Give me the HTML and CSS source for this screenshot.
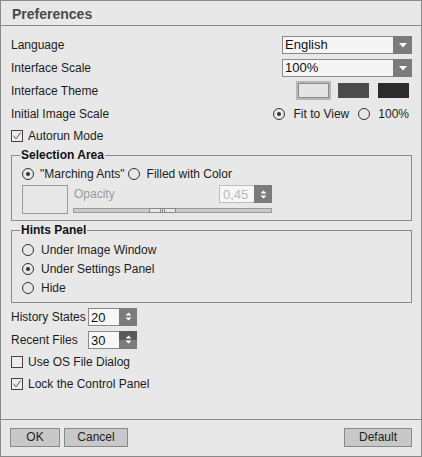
FILE: index.html
```html
<!DOCTYPE html>
<html>
<head>
<meta charset="utf-8">
<title>Preferences</title>
<link rel="stylesheet" href="styles.css">
</head>
<body>
<div class="window">
  <div class="titlebar">Preferences</div>
  <div class="content">
    <div class="row">
      <span class="label">Language</span>
      <div class="select">
        <span class="select-text">English</span>
        <span class="select-btn"><svg width="8" height="5" viewBox="0 0 8 5"><path d="M0 0H8L4 4.5Z" fill="#fff"/></svg></span>
      </div>
    </div>
    <div class="row">
      <span class="label">Interface Scale</span>
      <div class="select">
        <span class="select-text">100%</span>
        <span class="select-btn"><svg width="8" height="5" viewBox="0 0 8 5"><path d="M0 0H8L4 4.5Z" fill="#fff"/></svg></span>
      </div>
    </div>
    <div class="row">
      <span class="label">Interface Theme</span>
      <div class="themes">
        <span class="swatch swatch-light selected"></span>
        <span class="swatch swatch-mid"></span>
        <span class="swatch swatch-dark"></span>
      </div>
    </div>
    <div class="row">
      <span class="label">Initial Image Scale</span>
      <div class="radio-group">
        <span class="opt"><span class="radio checked"></span><span>Fit to View</span></span>
        <span class="opt"><span class="radio"></span><span>100%</span></span>
      </div>
    </div>
    <div class="row row-check">
      <span class="opt"><span class="checkbox"><svg width="10" height="10" viewBox="0 0 10 10"><path d="M1.5 4.8L4 7.8L8.8 1.5" fill="none" stroke="#555" stroke-width="1"/></svg></span><span>Autorun Mode</span></span>
    </div>

    <fieldset class="group group-sel">
      <legend>Selection Area</legend>
      <div class="sel-radios">
        <span class="opt"><span class="radio checked"></span><span>"Marching Ants"</span></span>
        <span class="opt"><span class="radio"></span><span>Filled with Color</span></span>
      </div>
      <div class="sel-color">
        <span class="color-box"></span>
        <div class="opacity">
          <div class="opacity-top">
            <span class="muted">Opacity</span>
            <div class="spin spin-disabled">
              <span class="spin-text">0,45</span>
              <span class="spin-btn"><svg width="7" height="9" viewBox="0 0 7 9"><path d="M0.5 3.5H6.5L3.5 0.5Z M0.5 5.5H6.5L3.5 8.5Z" fill="#fff"/></svg></span>
            </div>
          </div>
          <div class="slider">
            <span class="thumb" style="left:75px"><i></i><i></i><i></i></span>
          </div>
        </div>
      </div>
    </fieldset>

    <fieldset class="group group-hints">
      <legend>Hints Panel</legend>
      <div class="hint-row"><span class="opt"><span class="radio"></span><span>Under Image Window</span></span></div>
      <div class="hint-row"><span class="opt"><span class="radio checked"></span><span>Under Settings Panel</span></span></div>
      <div class="hint-row"><span class="opt"><span class="radio"></span><span>Hide</span></span></div>
    </fieldset>

    <div class="row row-spin first-spin">
      <span class="label label-fixed">History States</span>
      <div class="spin">
        <span class="spin-text">20</span>
        <span class="spin-btn"><svg width="7" height="9" viewBox="0 0 7 9"><path d="M0.5 3.5H6.5L3.5 0.5Z M0.5 5.5H6.5L3.5 8.5Z" fill="#fff"/></svg></span>
      </div>
    </div>
    <div class="row row-spin">
      <span class="label label-fixed">Recent Files</span>
      <div class="spin">
        <span class="spin-text">30</span>
        <span class="spin-btn spin-btn-hover"><svg width="7" height="9" viewBox="0 0 7 9"><path d="M0.5 3.5H6.5L3.5 0.5Z M0.5 5.5H6.5L3.5 8.5Z" fill="#fff"/></svg></span>
      </div>
    </div>
    <div class="row row-check">
      <span class="opt"><span class="checkbox"></span><span>Use OS File Dialog</span></span>
    </div>
    <div class="row row-check">
      <span class="opt"><span class="checkbox"><svg width="10" height="10" viewBox="0 0 10 10"><path d="M1.5 4.8L4 7.8L8.8 1.5" fill="none" stroke="#555" stroke-width="1"/></svg></span><span>Lock the Control Panel</span></span>
    </div>
  </div>
  <div class="footer">
    <div class="btns-left">
      <button class="btn btn-ok">OK</button>
      <button class="btn btn-cancel">Cancel</button>
    </div>
    <button class="btn btn-default">Default</button>
  </div>
</div>
</body>
</html>
```

FILE: styles.css
```css
html, body {
  margin: 0;
  padding: 0;
  background: #e8e8e8;
}
body {
  font-family: "Liberation Sans", Arial, sans-serif;
  font-size: 12px;
  color: #1c1c1c;
}
.window {
  width: 422px;
  height: 457px;
  box-sizing: border-box;
  border: 1px solid #8a8a8a;
  background: #e8e8e8;
  display: flex;
  flex-direction: column;
}
.titlebar {
  flex: none;
  height: 23px;
  padding-top: 1px;
  line-height: 24px;
  padding-left: 11px;
  border-bottom: 1px solid #8a8a8a;
  font-size: 14px;
  font-weight: bold;
  color: #4a4a4a;
}
.content {
  flex: 1;
  padding: 7px 9px 0 9px;
  display: flex;
  flex-direction: column;
}
.row {
  height: 23px;
  flex: none;
  display: flex;
  align-items: center;
  justify-content: space-between;
}
.label {
  padding-left: 1px;
}
.row-check {
  height: 22px;
  justify-content: flex-start;
}

/* select */
.select {
  width: 130px;
  height: 18px;
  box-sizing: border-box;
  border: 1px solid #8a8a8a;
  background: #f5f5f5;
  display: flex;
  align-items: stretch;
}
.select-text {
  flex: 1;
  padding-left: 2px;
  line-height: 16px;
  font-size: 13px;
  color: #111;
}
.select-btn {
  width: 19px;
  margin: -1px -1px -1px 0;
  background: #7b7b7b;
  display: flex;
  align-items: center;
  justify-content: center;
}
.select-btn svg {
  margin-top: 1px;
}

/* theme swatches */
.themes {
  display: flex;
  gap: 9px;
  padding-right: 3px;
}
.swatch {
  width: 31px;
  height: 15px;
  box-sizing: border-box;
}
.swatch-light {
  background: #e4e4e4;
  border: 1px solid #8c8c8c;
}
.swatch.selected {
  outline: 2px solid #b6b6b6;
}
.swatch-mid {
  background: #4b4b4b;
}
.swatch-dark {
  background: #2b2b2b;
}

/* radio / checkbox */
.radio-group {
  display: flex;
  gap: 9px;
  padding-right: 3px;
}
.opt {
  display: inline-flex;
  align-items: center;
  gap: 7px;
}
.radio-group .opt {
  gap: 8px;
}
.radio {
  width: 12px;
  height: 12px;
  box-sizing: border-box;
  border: 1px solid #333;
  border-radius: 50%;
  display: inline-flex;
  align-items: center;
  justify-content: center;
  flex: none;
}
.radio.checked::after {
  content: "";
  width: 4px;
  height: 4px;
  border-radius: 50%;
  background: #333;
}
.checkbox {
  width: 12px;
  height: 12px;
  box-sizing: border-box;
  border: 1px solid #444;
  background: #ececec;
  display: inline-flex;
  align-items: center;
  justify-content: center;
  flex: none;
  margin-left: 1px;
}
.row-check .opt {
  gap: 5px;
}

/* groups */
.group {
  margin: 1px 0 0 1px;
  padding: 0 10px 6px 10px;
  border: 1px solid #8a8a8a;
  min-width: 0;
}
.group legend {
  padding: 0 1px;
  margin-left: -2px;
  font-weight: bold;
  line-height: 14px;
  color: #111;
}
.sel-radios {
  height: 20px;
  margin-top: 2px;
  display: flex;
  align-items: center;
  gap: 3px;
}
.sel-radios .opt:first-child {
  gap: 6px;
}
.sel-color {
  margin-top: 1px;
  display: flex;
  align-items: flex-start;
}
.color-box {
  width: 46px;
  height: 29px;
  box-sizing: border-box;
  border: 1px solid #9a9a9a;
  background: #e8e8e8;
}
.opacity {
  width: 199px;
  margin-left: 5px;
  display: flex;
  flex-direction: column;
}
.opacity-top {
  height: 18px;
  display: flex;
  align-items: flex-start;
  justify-content: space-between;
}
.muted {
  color: #9a9a9a;
  line-height: 19px;
  padding-left: 1px;
}
.slider {
  position: relative;
  margin-top: 5px;
  height: 5px;
  box-sizing: border-box;
  border: 1px solid #9a9a9a;
  background: #cbcbcb;
}
.thumb {
  position: absolute;
  top: -1px;
  width: 27px;
  height: 5px;
  box-sizing: border-box;
  border: 1px solid #8a8a8a;
  background: #e6e6e6;
  display: flex;
  justify-content: center;
  gap: 1px;
}
.thumb i {
  width: 1px;
  height: 3px;
  background: #8a8a8a;
}

/* spin */
.spin {
  width: 49px;
  height: 18px;
  box-sizing: border-box;
  border: 1px solid #8a8a8a;
  background: #f7f7f7;
  display: flex;
}
.spin-text {
  flex: 1;
  padding-left: 2px;
  line-height: 18px;
  font-size: 13px;
  color: #111;
}
.spin-btn {
  width: 18px;
  margin: -1px -1px -1px 0;
  background: #7b7b7b;
  display: flex;
  align-items: center;
  justify-content: center;
}
.spin-btn-hover {
  background: linear-gradient(#5a5a5a 0 50%, #7b7b7b 50% 100%);
}
.spin-disabled {
  width: 53px;
  border-color: #bcbcbc;
}
.spin-disabled .spin-text {
  color: #b8b8b8;
  padding-left: 3px;
}

.group-hints {
  margin-top: 2px;
  padding-top: 0;
  padding-bottom: 5px;
}
.hint-row {
  height: 19px;
  display: flex;
  align-items: center;
}
.group-hints legend + .hint-row {
  margin-top: 3px;
}
.first-spin {
  margin-top: 2px;
}
.row-spin {
  justify-content: flex-start;
}
.label-fixed {
  width: 77px;
}

/* footer */
.footer {
  flex: none;
  height: 37px;
  box-sizing: border-box;
  border-top: 1px solid #8a8a8a;
  padding: 8px 9px 0 9px;
  display: flex;
  align-items: flex-start;
  justify-content: space-between;
}
.btns-left {
  display: flex;
  gap: 4px;
}
.btn {
  height: 19px;
  box-sizing: border-box;
  border: 1px solid #8a8a8a;
  background: #c8c8c8;
  font-family: "Liberation Sans", Arial, sans-serif;
  font-size: 12px;
  color: #222;
  padding: 0;
  margin: 0;
  line-height: 17px;
}
.btn-ok {
  width: 50px;
}
.btn-cancel {
  width: 64px;
}
.btn-default {
  width: 68px;
}
```
